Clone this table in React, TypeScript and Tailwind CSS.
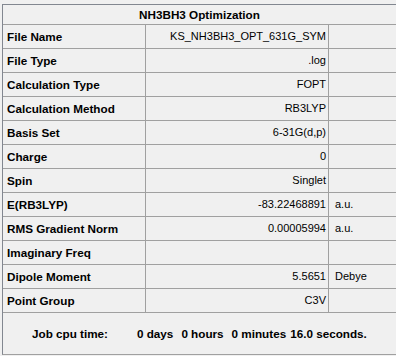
import React from 'react';

type Row = { label: string; value: string; unit?: string };

const rows: Row[] = [
  { label: 'File Name', value: 'KS_NH3BH3_OPT_631G_SYM' },
  { label: 'File Type', value: '.log' },
  { label: 'Calculation Type', value: 'FOPT' },
  { label: 'Calculation Method', value: 'RB3LYP' },
  { label: 'Basis Set', value: '6-31G(d,p)' },
  { label: 'Charge', value: '0' },
  { label: 'Spin', value: 'Singlet' },
  { label: 'E(RB3LYP)', value: '-83.22468891', unit: 'a.u.' },
  { label: 'RMS Gradient Norm', value: '0.00005994', unit: 'a.u.' },
  { label: 'Imaginary Freq', value: '' },
  { label: 'Dipole Moment', value: '5.5651', unit: 'Debye' },
  { label: 'Point Group', value: 'C3V' },
];

export default function App() {
  return (
    <div className="w-[396px] h-[356px] bg-[#f0f0f0] pt-[4px] pl-[2px] text-black font-['Liberation_Sans',Arial,sans-serif]">
      <div className="w-[394px] border-l border-t border-b border-l-[#828790] border-t-[#828790] border-b-[#a0a0a0]">
        {/* title */}
        <div className="h-[20px] border-b border-[#a0a0a0] flex items-center justify-center text-[11.7px] font-bold">
          NH3BH3 Optimization
        </div>

        {rows.map((r) => (
          <div key={r.label} className="flex h-[24px] border-b border-[#a0a0a0]">
            <div className="w-[143px] border-r border-[#a0a0a0] flex items-center pl-[4px] text-[11.7px] font-bold whitespace-nowrap">
              {r.label}
            </div>
            <div className="w-[183px] border-r border-[#a0a0a0] flex items-center justify-end pr-[2px] text-[11px] whitespace-nowrap">
              {r.value}
            </div>
            <div className="flex-1 flex items-center pl-[6px] text-[11px]">{r.unit}</div>
          </div>
        ))}

        {/* cpu time */}
        <div className="h-[41px] flex items-center pl-[29px] text-[11.7px] font-bold whitespace-nowrap">
          <span>Job cpu time:</span>
          <span className="ml-[29px]">0 days</span>
          <span className="ml-[8px]">0 hours</span>
          <span className="ml-[8px]">0 minutes</span>
          <span className="ml-[4px]">16.0 seconds.</span>
        </div>
      </div>
    </div>
  );
}
